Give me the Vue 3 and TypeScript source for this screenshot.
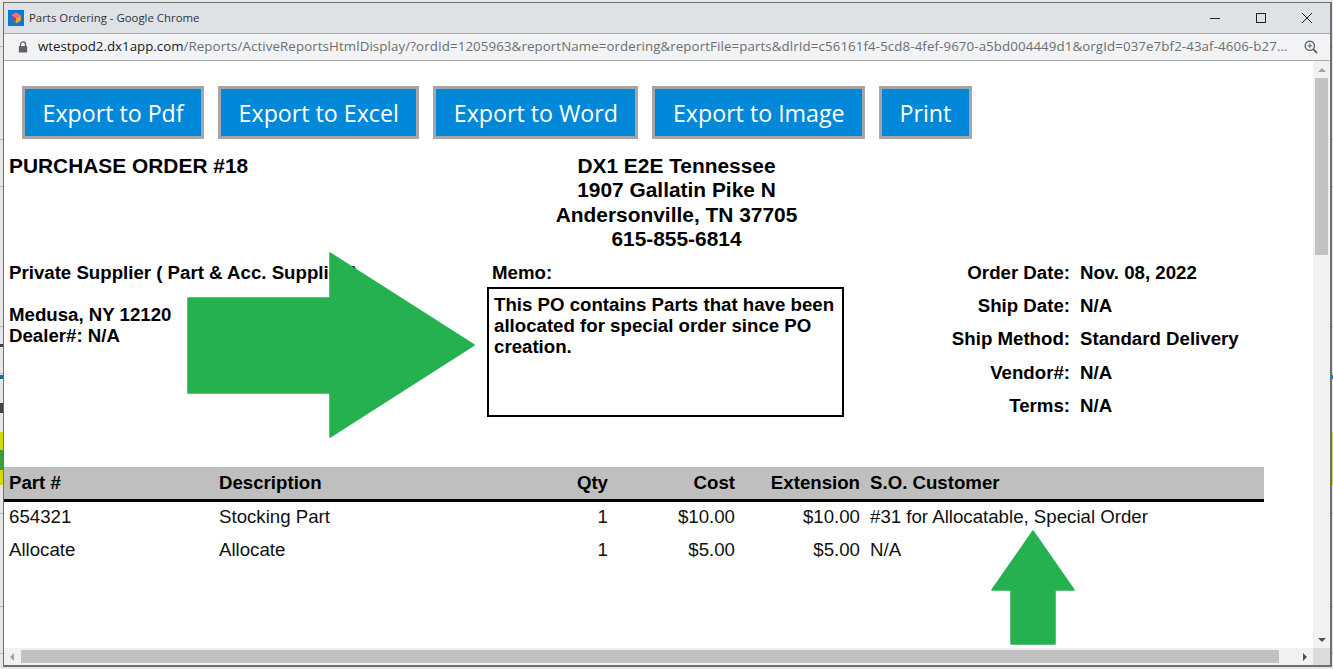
<template>
  <div class="desktop">
    <div class="window">
      <div class="titlebar">
        <svg class="favicon" viewBox="0 0 16 16" width="16" height="16">
          <rect width="16" height="16" fill="#0a78d2" />
          <path d="M8 2.5l4.8 2.7v5.6L8 13.5l-4.8-2.7V5.2z" fill="#d9534f" />
          <path d="M8 8l4.8-2.8v5.6L8 13.5z" fill="#e8a33d" />
          <path d="M3.2 5.2L8 8v5.5l-4.8-2.7z" fill="#6d4fa3" />
          <path d="M8 2.5l4.8 2.7L8 8 3.2 5.2z" fill="#e4737c" />
          <path d="M5.6 9.5l2.4 1.4v2.6l-2.4-1.4z" fill="#3f9e5a" />
        </svg>
        <span class="window-title">Parts Ordering - Google Chrome</span>
        <div class="controls">
          <svg viewBox="0 0 12 12" width="12" height="12"><path d="M1 6.5h10" stroke="#222" fill="none" /></svg>
          <svg viewBox="0 0 12 12" width="12" height="12"><rect x="1.5" y="1.5" width="9" height="9" stroke="#222" fill="none" /></svg>
          <svg viewBox="0 0 12 12" width="12" height="12"><path d="M1 1l10 10M11 1L1 11" stroke="#222" fill="none" /></svg>
        </div>
      </div>
      <div class="addressbar">
        <svg class="lock" viewBox="0 0 10 12" width="10" height="12">
          <path d="M2.5 5V3.4a2.5 2.5 0 0 1 5 0V5" stroke="#5f6368" stroke-width="1.3" fill="none" />
          <rect x="0.8" y="5" width="8.4" height="6.5" rx="0.8" fill="#5f6368" />
        </svg>
        <div class="url"><span class="host">wtestpod2.dx1app.com</span>/Reports/ActiveReportsHtmlDisplay/?ordId=1205963&amp;reportName=ordering&amp;reportFile=parts&amp;dlrId=c56161f4-5cd8-4fef-9670-a5bd004449d1&amp;orgId=037e7bf2-43af-4606-b27...</div>
        <svg class="zoom-icon" viewBox="0 0 14 14" width="14" height="14">
          <circle cx="5.8" cy="5.8" r="4.6" stroke="#5f6368" stroke-width="1.4" fill="none" />
          <path d="M9.2 9.2L13 13" stroke="#5f6368" stroke-width="1.8" />
          <path d="M3.5 5.8h4.6M5.8 3.5v4.6" stroke="#5f6368" stroke-width="1.1" />
        </svg>
      </div>

      <div class="viewport">
        <div class="page">
          <div class="toolbar">
            <button v-for="b in buttons" :key="b" class="export-btn">{{ b }}</button>
          </div>

          <div class="report-head">
            <div class="po-title">PURCHASE ORDER #18</div>
            <div class="dealer">
              <div>DX1 E2E Tennessee</div>
              <div>1907 Gallatin Pike N</div>
              <div>Andersonville, TN 37705</div>
              <div>615-855-6814</div>
            </div>
          </div>

          <div class="info">
            <div class="supplier">
              <div>Private Supplier ( Part &amp; Acc. Supplier )</div>
              <div class="supplier-addr">Medusa, NY 12120</div>
              <div>Dealer#: N/A</div>
            </div>
            <div class="memo">
              <div class="memo-label">Memo:</div>
              <div class="memo-box">This PO contains Parts that have been allocated for special order since PO creation.</div>
            </div>
            <div class="order-meta">
              <template v-for="m in meta" :key="m[0]">
                <div class="meta-label">{{ m[0] }}:</div>
                <div class="meta-value">{{ m[1] }}</div>
              </template>
            </div>
          </div>

          <div class="parts">
            <div class="row row-head">
              <div>Part #</div>
              <div>Description</div>
              <div class="num">Qty</div>
              <div class="num">Cost</div>
              <div class="num">Extension</div>
              <div>S.O. Customer</div>
            </div>
            <div v-for="r in rows" :key="r.part" class="row">
              <div>{{ r.part }}</div>
              <div>{{ r.desc }}</div>
              <div class="num">{{ r.qty }}</div>
              <div class="num">{{ r.cost }}</div>
              <div class="num">{{ r.ext }}</div>
              <div>{{ r.customer }}</div>
            </div>
          </div>

          <svg class="arrow arrow-right" width="290" height="187" viewBox="0 0 290 187">
            <path d="M2 46H144V1L288 93 144 185V141H2Z" fill="#25b14f" stroke="#25b14f" stroke-width="1.5" stroke-linejoin="round" />
          </svg>
          <svg class="arrow arrow-up" width="86" height="116" viewBox="0 0 86 116">
            <path d="M43 1L84 60H65V114H21V60H2Z" fill="#25b14f" stroke="#25b14f" stroke-width="1.5" stroke-linejoin="round" />
          </svg>
        </div>

        <div class="vbar">
          <span class="tri tri-up"></span>
          <div class="vthumb"></div>
          <span class="tri tri-down"></span>
        </div>
        <div class="hbar">
          <span class="tri tri-left"></span>
          <div class="hthumb"></div>
          <span class="tri tri-right"></span>
        </div>
        <div class="corner"></div>
      </div>
    </div>
  </div>
</template>

<script setup lang="ts">
const buttons: string[] = ['Export to Pdf', 'Export to Excel', 'Export to Word', 'Export to Image', 'Print']

const meta: [string, string][] = [
  ['Order Date', 'Nov. 08, 2022'],
  ['Ship Date', 'N/A'],
  ['Ship Method', 'Standard Delivery'],
  ['Vendor#', 'N/A'],
  ['Terms', 'N/A'],
]

const rows = [
  { part: '654321', desc: 'Stocking Part', qty: 1, cost: '$10.00', ext: '$10.00', customer: '#31 for Allocatable, Special Order' },
  { part: 'Allocate', desc: 'Allocate', qty: 1, cost: '$5.00', ext: '$5.00', customer: 'N/A' },
]
</script>

<style>
html,
body {
  margin: 0;
  overflow: hidden;
}
</style>

<style scoped>
/* the page behind the popup only shows as a thin strip on both sides */
.desktop {
  width: 1333px;
  height: 669px;
  box-sizing: border-box;
  padding: 2px 1px 2px 3px;
  background:
    linear-gradient(#0a6fb0, #0a6fb0) 0 375px / 100% 4px no-repeat,
    linear-gradient(#3f9e3a, #3f9e3a) 0 450px / 3px 20px no-repeat,
    linear-gradient(#d9d900, #d9d900) 0 432px / 100% 53px no-repeat,
    linear-gradient(#444, #444) 0 344px / 3px 3px no-repeat,
    linear-gradient(#444, #444) 0 403px / 3px 10px no-repeat,
    repeating-linear-gradient(#e6e6e6 0 46px, #b8b8b8 46px 46.7px);
}

.window {
  height: 100%;
  box-sizing: border-box;
  border: 1px solid #6f6f6f;
  border-right-width: 2px;
  border-bottom-width: 2px;
  display: flex;
  flex-direction: column;
  background: #fff;
  font-family: "Liberation Sans", Arial, sans-serif;
}

.titlebar {
  height: 30px;
  flex: none;
  background: #dee1e6;
  border-bottom: 1px solid #a9abae;
  display: flex;
  align-items: center;
  padding-left: 4px;
}

.favicon {
  margin-right: 5px;
}

.window-title {
  font: 11.4px "Open Sans", sans-serif;
  color: #333;
  margin-top: -1px;
}

.controls {
  margin-left: auto;
  display: flex;
  gap: 34px;
  padding-right: 17px;
}

.addressbar {
  height: 26px;
  flex: none;
  background: #f1f3f4;
  border-bottom: 1px solid #a9abae;
  display: flex;
  align-items: center;
}

.lock {
  margin: 0 9px 0 14px;
}

.url {
  flex: 1;
  min-width: 0;
  white-space: nowrap;
  overflow: hidden;
  font: 13.3px "Open Sans", sans-serif;
  letter-spacing: 0.1px;
  color: #6b6f73;
  margin-top: -2px;
  padding-left: 1px;
}

.host {
  color: #202124;
  letter-spacing: 0;
}

.zoom-icon {
  margin: 0 12px 0 12px;
}

.viewport {
  flex: 1;
  min-height: 0;
  display: grid;
  grid-template-columns: 1fr 17px;
  grid-template-rows: 1fr 17px;
}

.page {
  position: relative;
  overflow: hidden;
  padding-top: 25px;
}

.toolbar {
  display: flex;
  gap: 14px;
  padding-left: 18px;
}

.export-btn {
  height: 53px;
  padding: 0 17.5px;
  border: 3px solid #a6a6a6;
  background: #0288d9;
  color: #fff;
  font: 23.2px "Open Sans", sans-serif;
}

.report-head {
  position: relative;
  margin-top: 15px;
  padding-left: 5px;
  font-weight: 700;
  font-size: 20.9px;
  color: #000;
}

.po-title {
  position: absolute;
  line-height: 24px;
}

.dealer {
  width: 1335px;
  text-align: center;
  line-height: 24.3px;
}

.info {
  display: flex;
  padding-left: 5px;
  font-weight: 700;
  font-size: 18.67px;
  color: #000;
}

.supplier {
  width: 478px;
  line-height: 21px;
  padding-top: 11px;
}

.supplier-addr {
  margin-top: 21px;
}

.memo {
  width: 357px;
}

.memo-label {
  padding-left: 5px;
  line-height: 21px;
  margin-top: 11px;
}

.memo-box {
  height: 130px;
  box-sizing: border-box;
  margin-top: 4px;
  border: 2px solid #000;
  padding: 5px 5px;
  line-height: 21px;
}

.order-meta {
  margin-left: 80px;
  display: grid;
  grid-template-columns: 146px auto;
  column-gap: 10px;
  grid-auto-rows: 33.3px;
  align-items: center;
  padding-top: 5px;
  align-self: flex-start;
}

.meta-label {
  text-align: right;
}

.parts {
  margin-top: 44px;
  width: 1260px;
  font-size: 18.67px;
  color: #111;
}

.row {
  display: grid;
  grid-template-columns: 210px 300px 89px 127px 125px 1fr;
  height: 33px;
  box-sizing: border-box;
  padding-bottom: 2px;
  align-items: center;
  padding-left: 5px;
}

.row > div:last-child {
  padding-left: 10px;
}

.row-head {
  height: 35px;
  padding-bottom: 0;
  background: #bfbfbf;
  border-bottom: 3px solid #000;
  font-weight: 700;
  color: #000;
}

.num {
  text-align: right;
}

.arrow {
  position: absolute;
}

.arrow-right {
  left: 182px;
  top: 191px;
}

.arrow-up {
  left: 986px;
  top: 469px;
}

.vbar {
  background: #f1f1f1;
  display: flex;
  flex-direction: column;
  align-items: center;
  padding: 7px 0 6px;
  box-sizing: border-box;
}

.vthumb {
  width: 13px;
  height: 177px;
  margin-top: 6px;
  background: #c1c1c1;
}

.hbar {
  background: #f1f1f1;
  display: flex;
  align-items: center;
  padding: 0 6px 0 6px;
}

.hthumb {
  flex: 1;
  height: 13px;
  margin: 0 24px 0 7px;
  background: #c1c1c1;
}

.corner {
  background: #dcdcdc;
}

.tri {
  width: 0;
  height: 0;
  border-style: solid;
  border-color: transparent;
  flex: none;
}

.tri-up {
  border-width: 0 4px 4px;
  border-bottom-color: #a3a3a3;
}

.tri-down {
  margin-top: auto;
  border-width: 4px 4px 0;
  border-top-color: #505050;
}

.tri-left {
  border-width: 4px 4px 4px 0;
  border-right-color: #a3a3a3;
}

.tri-right {
  border-width: 4px 0 4px 4px;
  border-left-color: #505050;
}
</style>
